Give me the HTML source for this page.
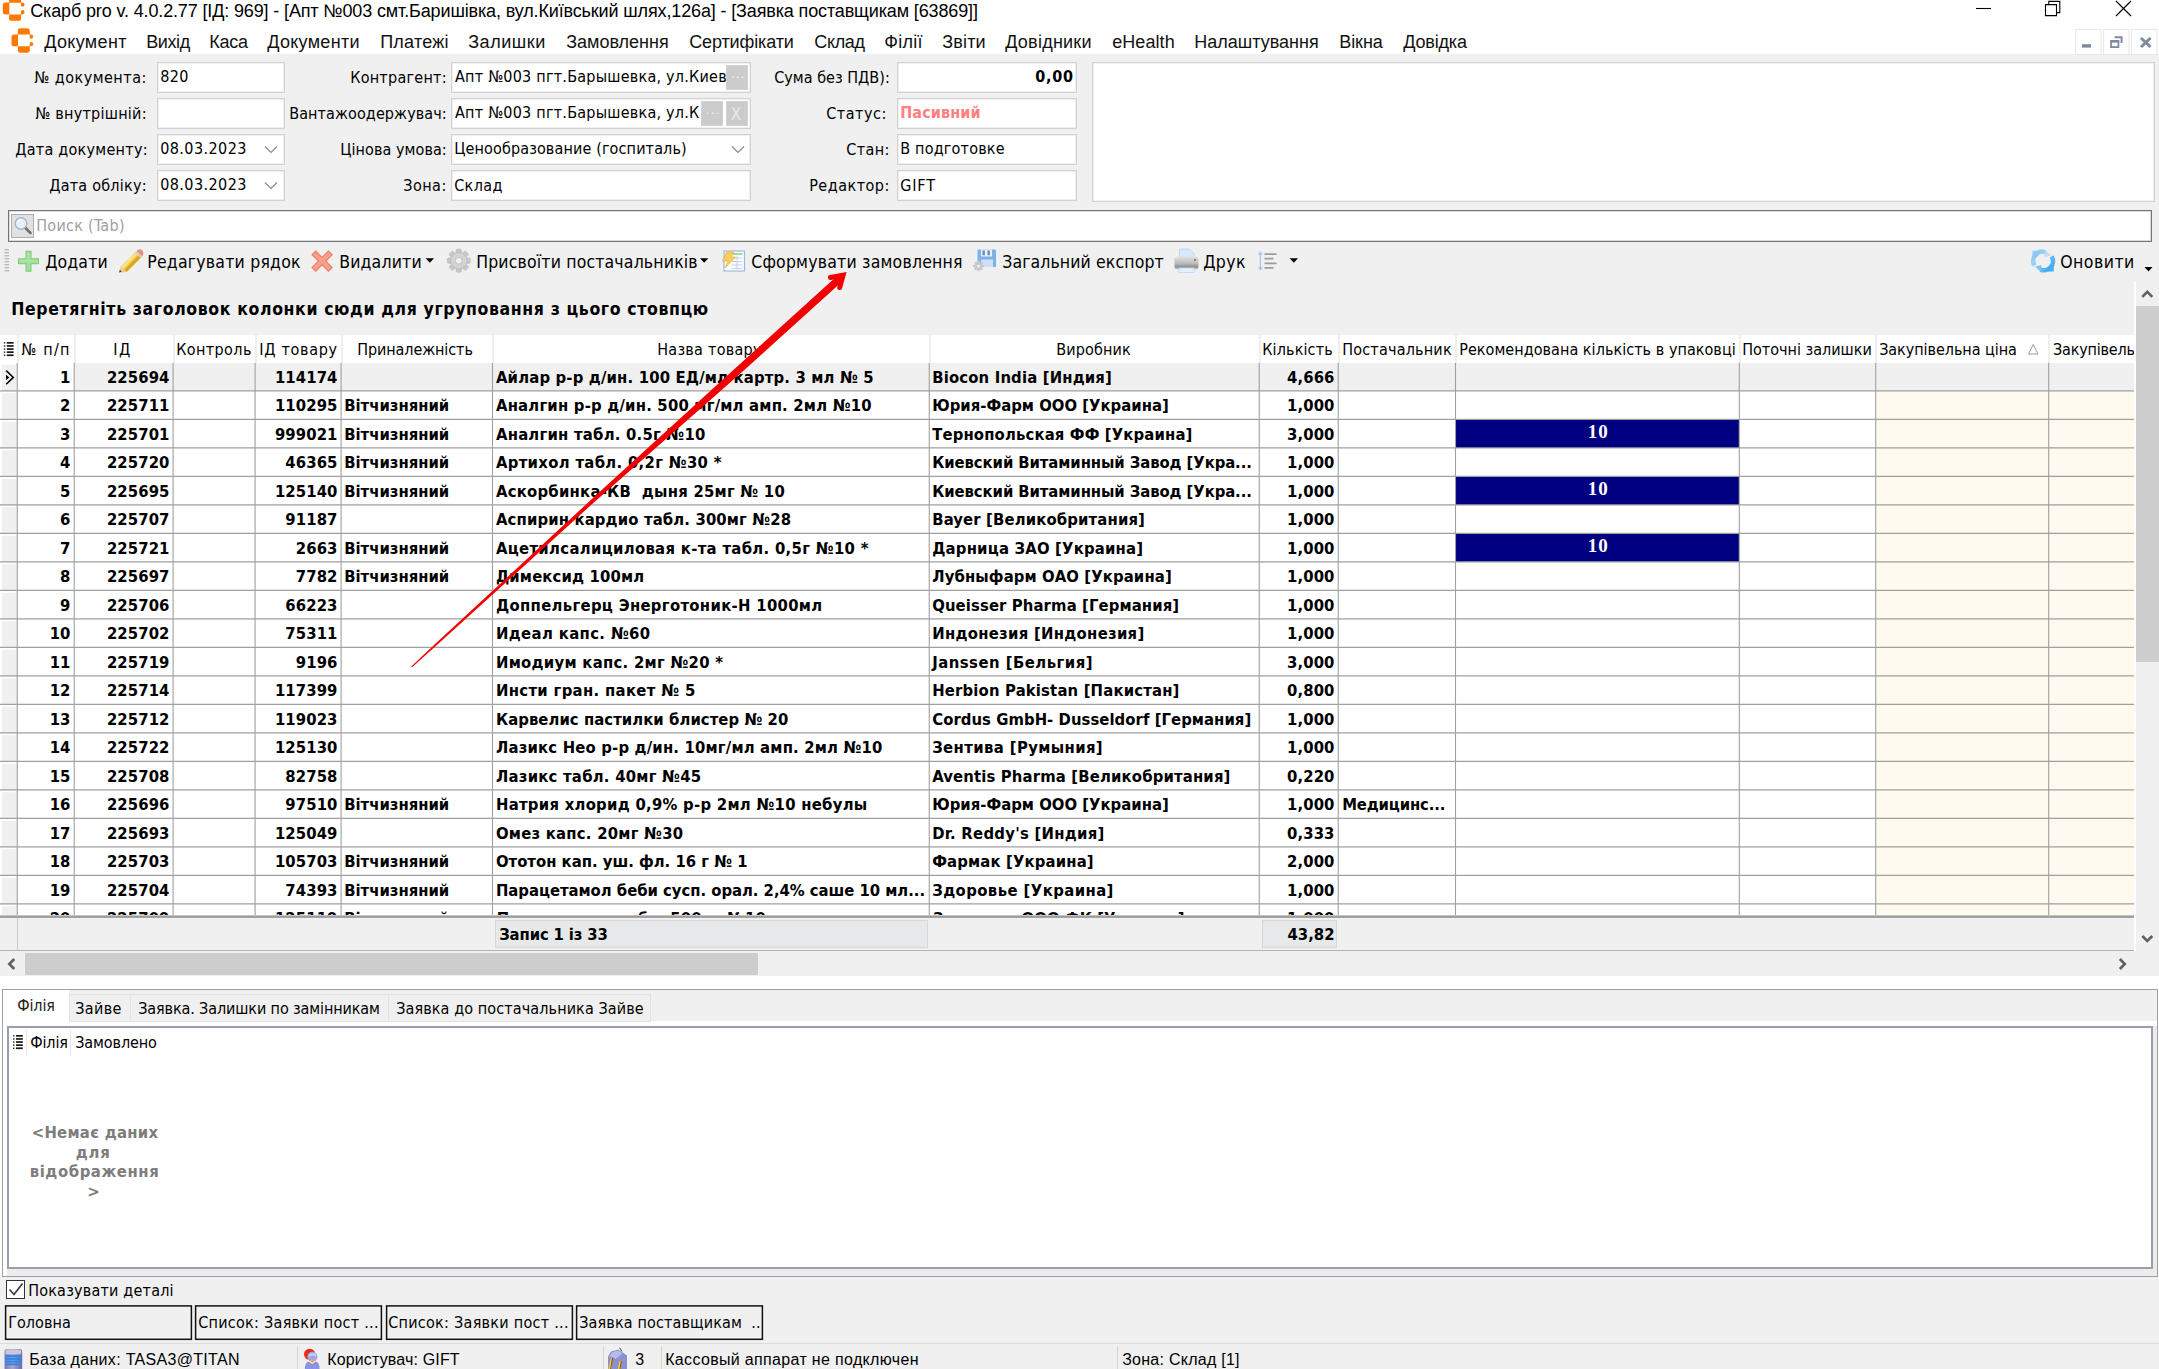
<!DOCTYPE html>
<html lang="uk"><head><meta charset="utf-8"><title>Скарб pro</title><style>
html,body{margin:0;padding:0;}
body{width:2159px;height:1369px;overflow:hidden;background:#f0f0f0;position:relative;font-family:"DejaVu Sans Condensed","Liberation Sans",sans-serif;font-size:16px;color:#000;}
.a{position:absolute;box-sizing:border-box;}
.t{white-space:pre;font-family:"DejaVu Sans Condensed","Liberation Sans",sans-serif;font-stretch:condensed;}
.s{font-family:"Liberation Sans",sans-serif;font-stretch:normal;}
.r{font-family:"Liberation Serif","DejaVu Serif",serif;font-stretch:normal;}
svg{position:absolute;overflow:visible;}
</style></head><body>
<div class="a" style="left:0px;top:0px;width:2159px;height:54px;background:#fff;"></div>
<div class="a t s" style="top:-1.5px;font-size:18px;line-height:24px;left:30.2px;letter-spacing:-0.139px;">Скарб pro v. 4.0.2.77 [ІД: 969] - [Апт №003 смт.Баришівка, вул.Київський шлях,126а] - [Заявка поставщикам [63869]]</div>
<div class="a t s" style="top:30px;font-size:18px;line-height:24px;color:#111;left:44.2px;letter-spacing:0.343px;">Документ</div>
<div class="a t s" style="top:30px;font-size:18px;line-height:24px;color:#111;left:146.2px;letter-spacing:-0.392px;">Вихід</div>
<div class="a t s" style="top:30px;font-size:18px;line-height:24px;color:#111;left:209.2px;letter-spacing:-0.229px;">Каса</div>
<div class="a t s" style="top:30px;font-size:18px;line-height:24px;color:#111;left:267.2px;letter-spacing:0.299px;">Документи</div>
<div class="a t s" style="top:30px;font-size:18px;line-height:24px;color:#111;left:380.2px;letter-spacing:0.235px;">Платежі</div>
<div class="a t s" style="top:30px;font-size:18px;line-height:24px;color:#111;left:468.2px;letter-spacing:0.541px;">Залишки</div>
<div class="a t s" style="top:30px;font-size:18px;line-height:24px;color:#111;left:566.2px;">Замовлення</div>
<div class="a t s" style="top:30px;font-size:18px;line-height:24px;color:#111;left:689.2px;letter-spacing:-0.120px;">Сертифікати</div>
<div class="a t s" style="top:30px;font-size:18px;line-height:24px;color:#111;left:814.2px;letter-spacing:-0.299px;">Склад</div>
<div class="a t s" style="top:30px;font-size:18px;line-height:24px;color:#111;left:884.2px;letter-spacing:0.283px;">Філії</div>
<div class="a t s" style="top:30px;font-size:18px;line-height:24px;color:#111;left:942.2px;letter-spacing:0.173px;">Звіти</div>
<div class="a t s" style="top:30px;font-size:18px;line-height:24px;color:#111;left:1005.2px;letter-spacing:0.244px;">Довідники</div>
<div class="a t s" style="top:30px;font-size:18px;line-height:24px;color:#111;left:1112.2px;letter-spacing:0.079px;">eHealth</div>
<div class="a t s" style="top:30px;font-size:18px;line-height:24px;color:#111;left:1194.2px;letter-spacing:0.015px;">Налаштування</div>
<div class="a t s" style="top:30px;font-size:18px;line-height:24px;color:#111;left:1339.2px;letter-spacing:-0.049px;">Вікна</div>
<div class="a t s" style="top:30px;font-size:18px;line-height:24px;color:#111;left:1403.2px;letter-spacing:-0.164px;">Довідка</div>
<div class="a" style="left:157px;top:62px;width:128px;height:31px;background:#fff;border:1px solid #d2d2d2;box-shadow:inset 0 0 0 1px #f0f0f0;"></div>
<div class="a" style="left:451px;top:62px;width:300px;height:31px;background:#fff;border:1px solid #d2d2d2;box-shadow:inset 0 0 0 1px #f0f0f0;"></div>
<div class="a" style="left:897px;top:62px;width:180px;height:31px;background:#fff;border:1px solid #d2d2d2;box-shadow:inset 0 0 0 1px #f0f0f0;"></div>
<div class="a" style="left:157px;top:98px;width:128px;height:31px;background:#fff;border:1px solid #d2d2d2;box-shadow:inset 0 0 0 1px #f0f0f0;"></div>
<div class="a" style="left:451px;top:98px;width:300px;height:31px;background:#fff;border:1px solid #d2d2d2;box-shadow:inset 0 0 0 1px #f0f0f0;"></div>
<div class="a" style="left:897px;top:98px;width:180px;height:31px;background:#fff;border:1px solid #d2d2d2;box-shadow:inset 0 0 0 1px #f0f0f0;"></div>
<div class="a" style="left:157px;top:134px;width:128px;height:31px;background:#fff;border:1px solid #d2d2d2;box-shadow:inset 0 0 0 1px #f0f0f0;"></div>
<div class="a" style="left:451px;top:134px;width:300px;height:31px;background:#fff;border:1px solid #d2d2d2;box-shadow:inset 0 0 0 1px #f0f0f0;"></div>
<div class="a" style="left:897px;top:134px;width:180px;height:31px;background:#fff;border:1px solid #d2d2d2;box-shadow:inset 0 0 0 1px #f0f0f0;"></div>
<div class="a" style="left:157px;top:170px;width:128px;height:31px;background:#fff;border:1px solid #d2d2d2;box-shadow:inset 0 0 0 1px #f0f0f0;"></div>
<div class="a" style="left:451px;top:170px;width:300px;height:31px;background:#fff;border:1px solid #d2d2d2;box-shadow:inset 0 0 0 1px #f0f0f0;"></div>
<div class="a" style="left:897px;top:170px;width:180px;height:31px;background:#fff;border:1px solid #d2d2d2;box-shadow:inset 0 0 0 1px #f0f0f0;"></div>
<div class="a" style="left:1092px;top:62px;width:1063px;height:140px;background:#fff;border:1px solid #d2d2d2;box-shadow:inset 0 0 0 1px #f0f0f0;"></div>
<div class="a" style="left:726px;top:65px;width:22px;height:25px;background:#cbcbcb;border:1px solid #d2d2d2;"></div>
<div class="a" style="left:701px;top:101px;width:22px;height:25px;background:#cbcbcb;border:1px solid #d2d2d2;"></div>
<div class="a" style="left:726px;top:101px;width:22px;height:25px;background:#cbcbcb;border:1px solid #d2d2d2;"></div>
<div class="a t" style="top:65.5px;font-size:16px;line-height:24px;left:34.2px;letter-spacing:0.491px;">№ документа:</div>
<div class="a t" style="top:101.5px;font-size:16px;line-height:24px;left:35.2px;letter-spacing:0.255px;">№ внутрішній:</div>
<div class="a t" style="top:137.5px;font-size:16px;line-height:24px;left:15.2px;letter-spacing:0.260px;">Дата документу:</div>
<div class="a t" style="top:173.5px;font-size:16px;line-height:24px;left:49.2px;letter-spacing:0.234px;">Дата обліку:</div>
<div class="a t" style="top:65.5px;font-size:16px;line-height:24px;left:350.2px;letter-spacing:0.249px;">Контрагент:</div>
<div class="a t" style="top:101.5px;font-size:16px;line-height:24px;left:289.2px;letter-spacing:0.094px;">Вантажоодержувач:</div>
<div class="a t" style="top:137.5px;font-size:16px;line-height:24px;left:340.2px;letter-spacing:0.076px;">Цінова умова:</div>
<div class="a t" style="top:173.5px;font-size:16px;line-height:24px;left:403.2px;letter-spacing:0.495px;">Зона:</div>
<div class="a t" style="top:65.5px;font-size:16px;line-height:24px;left:774.2px;letter-spacing:0.028px;">Сума без ПДВ):</div>
<div class="a t" style="top:101.5px;font-size:16px;line-height:24px;left:826.2px;letter-spacing:0.525px;">Статус:</div>
<div class="a t" style="top:137.5px;font-size:16px;line-height:24px;left:846.2px;letter-spacing:0.414px;">Стан:</div>
<div class="a t" style="top:173.5px;font-size:16px;line-height:24px;left:809.2px;letter-spacing:0.490px;">Редактор:</div>
<div class="a t" style="top:65px;font-size:16px;line-height:24px;left:160.2px;letter-spacing:0.377px;">820</div>
<div class="a t" style="top:137px;font-size:16px;line-height:24px;left:160.2px;letter-spacing:0.421px;">08.03.2023</div>
<div class="a t" style="top:173px;font-size:16px;line-height:24px;left:160.2px;letter-spacing:0.421px;">08.03.2023</div>
<div class="a" style="left:453px;top:64px;width:272.5px;height:27px;overflow:hidden"><div class="a t" style="left:2px;top:1px;line-height:24px;letter-spacing:.23px">Апт №003 пгт.Барышевка, ул.Киевс</div></div>
<div class="a" style="left:453px;top:100px;width:247px;height:27px;overflow:hidden"><div class="a t" style="left:2px;top:1px;line-height:24px;letter-spacing:.23px">Апт №003 пгт.Барышевка, ул.Ки</div></div>
<div class="a t" style="top:61.5px;font-size:13px;line-height:24px;color:#f2f2f2;left:730.7px;letter-spacing:1.320px;">...</div>
<div class="a t" style="top:97.5px;font-size:13px;line-height:24px;color:#f2f2f2;left:705.7px;letter-spacing:1.320px;">...</div>
<div class="a t" style="top:102px;font-size:17px;line-height:24px;color:#e9e9ee;left:730.7px;letter-spacing:2.116px;">X</div>
<div class="a t" style="top:137px;font-size:16px;line-height:24px;left:454.2px;letter-spacing:0.132px;">Ценообразование (госпиталь)</div>
<div class="a t" style="top:174px;font-size:16px;line-height:24px;left:454.2px;letter-spacing:0.373px;">Склад</div>
<div class="a t" style="top:65px;font-size:16px;line-height:24px;font-weight:bold;left:1035.2px;letter-spacing:0.771px;">0,00</div>
<div class="a t" style="top:101px;font-size:16px;line-height:24px;font-weight:bold;color:#ff8080;left:900.2px;letter-spacing:0.124px;">Пасивний</div>
<div class="a t" style="top:137px;font-size:16px;line-height:24px;left:900.2px;letter-spacing:0.198px;">В подготовке</div>
<div class="a t" style="top:174px;font-size:16px;line-height:24px;left:900.2px;letter-spacing:0.853px;">GIFT</div>
<div class="a" style="left:8px;top:210px;width:2144px;height:32px;background:#fff;border:1px solid #747474;box-shadow:inset 0 0 0 1px #dcdcdc;"></div>
<div class="a" style="left:11px;top:214px;width:23px;height:24px;background:#e1e1e1;border:1px solid #adadad;"></div>
<div class="a t" style="top:213.5px;font-size:16px;line-height:24px;color:#a0a0a0;left:36.2px;letter-spacing:0.282px;">Поиск (Tab)</div>
<div class="a t" style="top:250px;font-size:17.5px;line-height:24px;left:45.2px;letter-spacing:0.121px;">Додати</div>
<div class="a t" style="top:250px;font-size:17.5px;line-height:24px;left:147.2px;letter-spacing:0.217px;">Редагувати рядок</div>
<div class="a t" style="top:250px;font-size:17.5px;line-height:24px;left:339.2px;letter-spacing:0.167px;">Видалити</div>
<div class="a t" style="top:250px;font-size:17.5px;line-height:24px;left:476.2px;letter-spacing:0.158px;">Присвоїти постачальників</div>
<div class="a t" style="top:250px;font-size:17.5px;line-height:24px;left:751.2px;letter-spacing:0.208px;">Сформувати замовлення</div>
<div class="a t" style="top:250px;font-size:17.5px;line-height:24px;left:1002.2px;letter-spacing:0.111px;">Загальний експорт</div>
<div class="a t" style="top:250px;font-size:17.5px;line-height:24px;left:1203.2px;letter-spacing:0.365px;">Друк</div>
<div class="a t" style="top:250px;font-size:17.5px;line-height:24px;left:2060.2px;letter-spacing:0.481px;">Оновити</div>
<div class="a t" style="top:296.5px;font-size:17.5px;line-height:24px;font-weight:bold;left:11.2px;letter-spacing:0.627px;">Перетягніть заголовок колонки сюди для угруповання з цього стовпцю</div>
<div class="a" style="left:0px;top:335px;width:2134px;height:28px;background:#fff;"></div>
<div class="a t" style="top:337.5px;font-size:16px;line-height:24px;left:21.2px;letter-spacing:1.273px;">№ п/п</div>
<div class="a t" style="top:337.5px;font-size:16px;line-height:24px;left:113.2px;letter-spacing:1.550px;">ІД</div>
<div class="a t" style="top:337.5px;font-size:16px;line-height:24px;left:176.2px;letter-spacing:0.393px;">Контроль</div>
<div class="a t" style="top:337.5px;font-size:16px;line-height:24px;left:259.2px;letter-spacing:0.709px;">ІД товару</div>
<div class="a t" style="top:337.5px;font-size:16px;line-height:24px;left:357.2px;letter-spacing:-0.091px;">Приналежність</div>
<div class="a t" style="top:337.5px;font-size:16px;line-height:24px;left:657.2px;letter-spacing:0.273px;">Назва товару</div>
<div class="a t" style="top:337.5px;font-size:16px;line-height:24px;left:1056.2px;letter-spacing:0.136px;">Виробник</div>
<div class="a t" style="top:337.5px;font-size:16px;line-height:24px;left:1262.2px;letter-spacing:0.134px;">Кількість</div>
<div class="a t" style="top:337.5px;font-size:16px;line-height:24px;left:1342.2px;letter-spacing:0.197px;">Постачальник</div>
<div class="a t" style="top:337.5px;font-size:16px;line-height:24px;left:1459.2px;letter-spacing:0.045px;">Рекомендована кількість в упаковці</div>
<div class="a t" style="top:337.5px;font-size:16px;line-height:24px;left:1742.2px;">Поточні залишки</div>
<div class="a t" style="top:337.5px;font-size:16px;line-height:24px;left:1879.2px;letter-spacing:-0.056px;">Закупівельна ціна</div>
<div class="a" style="left:2049px;top:335px;width:85px;height:28px;overflow:hidden"><div class="a t" style="left:4px;top:2.5px;line-height:24px;font-size:16px;letter-spacing:-0.2px">Закупівельна</div></div>
<div class="a" style="left:17px;top:335px;width:2px;height:28px;background:#efefef;"></div>
<div class="a" style="left:74px;top:335px;width:2px;height:28px;background:#efefef;"></div>
<div class="a" style="left:173px;top:335px;width:2px;height:28px;background:#efefef;"></div>
<div class="a" style="left:255px;top:335px;width:2px;height:28px;background:#efefef;"></div>
<div class="a" style="left:341px;top:335px;width:2px;height:28px;background:#efefef;"></div>
<div class="a" style="left:492px;top:335px;width:2px;height:28px;background:#efefef;"></div>
<div class="a" style="left:929px;top:335px;width:2px;height:28px;background:#efefef;"></div>
<div class="a" style="left:1259px;top:335px;width:2px;height:28px;background:#efefef;"></div>
<div class="a" style="left:1338px;top:335px;width:2px;height:28px;background:#efefef;"></div>
<div class="a" style="left:1455px;top:335px;width:2px;height:28px;background:#efefef;"></div>
<div class="a" style="left:1739px;top:335px;width:2px;height:28px;background:#efefef;"></div>
<div class="a" style="left:1875px;top:335px;width:2px;height:28px;background:#efefef;"></div>
<div class="a" style="left:2048px;top:335px;width:2px;height:28px;background:#efefef;"></div>
<div class="a" style="left:0;top:363px;width:2134px;height:552px;overflow:hidden;background:#fff">
<div class="a" style="left:2px;top:0;width:15px;height:600px;background:#f0f0f0"></div>
<div class="a" style="left:1876px;top:27.5px;width:258px;height:600px;background:#fffaf0"></div>
<div class="a" style="left:75px;top:0;width:2059px;height:27.5px;background:#f0f0f0"></div>
<div class="a" style="left:1456px;top:57px;width:283px;height:27.5px;background:#000080"></div>
<div class="a" style="left:1456px;top:114px;width:283px;height:27.5px;background:#000080"></div>
<div class="a" style="left:1456px;top:171px;width:283px;height:27.5px;background:#000080"></div>
<svg width="2134" height="552" viewBox="0 0 2134 552" style="left:0;top:0"><path d="M0 0.9H16.5" stroke="#fff" stroke-width="1.6"/><path d="M0 29.4H16.5" stroke="#fff" stroke-width="1.6"/><path d="M0 57.9H16.5" stroke="#fff" stroke-width="1.6"/><path d="M0 86.4H16.5" stroke="#fff" stroke-width="1.6"/><path d="M0 114.9H16.5" stroke="#fff" stroke-width="1.6"/><path d="M0 143.4H16.5" stroke="#fff" stroke-width="1.6"/><path d="M0 171.9H16.5" stroke="#fff" stroke-width="1.6"/><path d="M0 200.4H16.5" stroke="#fff" stroke-width="1.6"/><path d="M0 228.9H16.5" stroke="#fff" stroke-width="1.6"/><path d="M0 257.4H16.5" stroke="#fff" stroke-width="1.6"/><path d="M0 285.9H16.5" stroke="#fff" stroke-width="1.6"/><path d="M0 314.4H16.5" stroke="#fff" stroke-width="1.6"/><path d="M0 342.9H16.5" stroke="#fff" stroke-width="1.6"/><path d="M0 371.4H16.5" stroke="#fff" stroke-width="1.6"/><path d="M0 399.9H16.5" stroke="#fff" stroke-width="1.6"/><path d="M0 428.4H16.5" stroke="#fff" stroke-width="1.6"/><path d="M0 456.9H16.5" stroke="#fff" stroke-width="1.6"/><path d="M0 485.4H16.5" stroke="#fff" stroke-width="1.6"/><path d="M0 513.9H16.5" stroke="#fff" stroke-width="1.6"/><path d="M0 542.4H16.5" stroke="#fff" stroke-width="1.6"/><path d="M0 570.9H16.5" stroke="#fff" stroke-width="1.6"/><path d="M0 27.85H2134M0 56.35H2134M0 84.85H2134M0 113.35H2134M0 141.85H2134M0 170.35H2134M0 198.85H2134M0 227.35H2134M0 255.85H2134M0 284.35H2134M0 312.85H2134M0 341.35H2134M0 369.85H2134M0 398.35H2134M0 426.85H2134M0 455.35H2134M0 483.85H2134M0 512.35H2134M0 540.85H2134M0 569.35H2134M17.27 0V552M74.25 0V552M173.1 0V552M255.1 0V552M341.1 0V552M492.5 0V552M929.25 0V552M1259.25 0V552M1338.25 0V552M1455.5 0V552M1739.3 0V552M1875.7 0V552M2048.7 0V552" stroke="#a0a0a0" stroke-width="1.1" fill="none"/><path d="M6.2 7.6L13.3 14.4L6.2 21.2" stroke="#000" stroke-width="1.5" fill="none"/><path d="M6 11.8L9.4 14.4L6 17z" fill="#000"/></svg>
</div>
<div class="a t" style="top:366px;font-size:16.5px;line-height:24px;font-weight:bold;right:2088.5px;letter-spacing:.1px;">1</div>
<div class="a t" style="top:366px;font-size:16.5px;line-height:24px;font-weight:bold;right:1989.5px;letter-spacing:.1px;">225694</div>
<div class="a t" style="top:366px;font-size:16.5px;line-height:24px;font-weight:bold;right:1821.5px;letter-spacing:.1px;">114174</div>
<div class="a t" style="top:366px;font-size:16.5px;line-height:24px;font-weight:bold;left:495.95px;letter-spacing:0.169px;">Айлар р-р д/ин. 100 ЕД/мл картр. 3 мл № 5</div>
<div class="a t" style="top:366px;font-size:16.5px;line-height:24px;font-weight:bold;left:932.2px;letter-spacing:0.168px;">Biocon India [Индия]</div>
<div class="a t" style="top:366px;font-size:16.5px;line-height:24px;font-weight:bold;right:824.5px;letter-spacing:.1px;">4,666</div>
<div class="a t" style="top:394px;font-size:16.5px;line-height:24px;font-weight:bold;right:2088.5px;letter-spacing:.1px;">2</div>
<div class="a t" style="top:394px;font-size:16.5px;line-height:24px;font-weight:bold;right:1989.5px;letter-spacing:.1px;">225711</div>
<div class="a t" style="top:394px;font-size:16.5px;line-height:24px;font-weight:bold;right:1821.5px;letter-spacing:.1px;">110295</div>
<div class="a t" style="top:394px;font-size:16.5px;line-height:24px;font-weight:bold;left:344.2px;">Вітчизняний</div>
<div class="a t" style="top:394px;font-size:16.5px;line-height:24px;font-weight:bold;left:495.95px;letter-spacing:0.208px;">Аналгин р-р д/ин. 500 мг/мл амп. 2мл №10</div>
<div class="a t" style="top:394px;font-size:16.5px;line-height:24px;font-weight:bold;left:932.2px;letter-spacing:0.016px;">Юрия-Фарм ООО [Украина]</div>
<div class="a t" style="top:394px;font-size:16.5px;line-height:24px;font-weight:bold;right:824.5px;letter-spacing:.1px;">1,000</div>
<div class="a t" style="top:423px;font-size:16.5px;line-height:24px;font-weight:bold;right:2088.5px;letter-spacing:.1px;">3</div>
<div class="a t" style="top:423px;font-size:16.5px;line-height:24px;font-weight:bold;right:1989.5px;letter-spacing:.1px;">225701</div>
<div class="a t" style="top:423px;font-size:16.5px;line-height:24px;font-weight:bold;right:1821.5px;letter-spacing:.1px;">999021</div>
<div class="a t" style="top:423px;font-size:16.5px;line-height:24px;font-weight:bold;left:344.2px;">Вітчизняний</div>
<div class="a t" style="top:423px;font-size:16.5px;line-height:24px;font-weight:bold;left:495.95px;letter-spacing:0.226px;">Аналгин табл. 0.5г №10</div>
<div class="a t" style="top:423px;font-size:16.5px;line-height:24px;font-weight:bold;left:932.2px;letter-spacing:0.144px;">Тернопольская ФФ [Украина]</div>
<div class="a t" style="top:423px;font-size:16.5px;line-height:24px;font-weight:bold;right:824.5px;letter-spacing:.1px;">3,000</div>
<div class="a t r" style="top:420px;font-size:19px;line-height:24px;font-weight:bold;color:#fff;left:1587.7px;letter-spacing:1.050px;">10</div>
<div class="a t" style="top:451px;font-size:16.5px;line-height:24px;font-weight:bold;right:2088.5px;letter-spacing:.1px;">4</div>
<div class="a t" style="top:451px;font-size:16.5px;line-height:24px;font-weight:bold;right:1989.5px;letter-spacing:.1px;">225720</div>
<div class="a t" style="top:451px;font-size:16.5px;line-height:24px;font-weight:bold;right:1821.5px;letter-spacing:.1px;">46365</div>
<div class="a t" style="top:451px;font-size:16.5px;line-height:24px;font-weight:bold;left:344.2px;">Вітчизняний</div>
<div class="a t" style="top:451px;font-size:16.5px;line-height:24px;font-weight:bold;left:495.95px;letter-spacing:0.316px;">Артихол табл. 0,2г №30 *</div>
<div class="a t" style="top:451px;font-size:16.5px;line-height:24px;font-weight:bold;left:932.2px;letter-spacing:-0.082px;">Киевский Витаминный Завод [Укра...</div>
<div class="a t" style="top:451px;font-size:16.5px;line-height:24px;font-weight:bold;right:824.5px;letter-spacing:.1px;">1,000</div>
<div class="a t" style="top:480px;font-size:16.5px;line-height:24px;font-weight:bold;right:2088.5px;letter-spacing:.1px;">5</div>
<div class="a t" style="top:480px;font-size:16.5px;line-height:24px;font-weight:bold;right:1989.5px;letter-spacing:.1px;">225695</div>
<div class="a t" style="top:480px;font-size:16.5px;line-height:24px;font-weight:bold;right:1821.5px;letter-spacing:.1px;">125140</div>
<div class="a t" style="top:480px;font-size:16.5px;line-height:24px;font-weight:bold;left:344.2px;">Вітчизняний</div>
<div class="a t" style="top:480px;font-size:16.5px;line-height:24px;font-weight:bold;left:495.95px;letter-spacing:0.244px;">Аскорбинка-КВ  дыня 25мг № 10</div>
<div class="a t" style="top:480px;font-size:16.5px;line-height:24px;font-weight:bold;left:932.2px;letter-spacing:-0.082px;">Киевский Витаминный Завод [Укра...</div>
<div class="a t" style="top:480px;font-size:16.5px;line-height:24px;font-weight:bold;right:824.5px;letter-spacing:.1px;">1,000</div>
<div class="a t r" style="top:477px;font-size:19px;line-height:24px;font-weight:bold;color:#fff;left:1587.7px;letter-spacing:1.050px;">10</div>
<div class="a t" style="top:508px;font-size:16.5px;line-height:24px;font-weight:bold;right:2088.5px;letter-spacing:.1px;">6</div>
<div class="a t" style="top:508px;font-size:16.5px;line-height:24px;font-weight:bold;right:1989.5px;letter-spacing:.1px;">225707</div>
<div class="a t" style="top:508px;font-size:16.5px;line-height:24px;font-weight:bold;right:1821.5px;letter-spacing:.1px;">91187</div>
<div class="a t" style="top:508px;font-size:16.5px;line-height:24px;font-weight:bold;left:495.95px;letter-spacing:0.141px;">Аспирин кардио табл. 300мг №28</div>
<div class="a t" style="top:508px;font-size:16.5px;line-height:24px;font-weight:bold;left:932.2px;letter-spacing:0.140px;">Bayer [Великобритания]</div>
<div class="a t" style="top:508px;font-size:16.5px;line-height:24px;font-weight:bold;right:824.5px;letter-spacing:.1px;">1,000</div>
<div class="a t" style="top:537px;font-size:16.5px;line-height:24px;font-weight:bold;right:2088.5px;letter-spacing:.1px;">7</div>
<div class="a t" style="top:537px;font-size:16.5px;line-height:24px;font-weight:bold;right:1989.5px;letter-spacing:.1px;">225721</div>
<div class="a t" style="top:537px;font-size:16.5px;line-height:24px;font-weight:bold;right:1821.5px;letter-spacing:.1px;">2663</div>
<div class="a t" style="top:537px;font-size:16.5px;line-height:24px;font-weight:bold;left:344.2px;">Вітчизняний</div>
<div class="a t" style="top:537px;font-size:16.5px;line-height:24px;font-weight:bold;left:495.95px;letter-spacing:0.317px;">Ацетилсалициловая к-та табл. 0,5г №10 *</div>
<div class="a t" style="top:537px;font-size:16.5px;line-height:24px;font-weight:bold;left:932.2px;letter-spacing:0.198px;">Дарница ЗАО [Украина]</div>
<div class="a t" style="top:537px;font-size:16.5px;line-height:24px;font-weight:bold;right:824.5px;letter-spacing:.1px;">1,000</div>
<div class="a t r" style="top:534px;font-size:19px;line-height:24px;font-weight:bold;color:#fff;left:1587.7px;letter-spacing:1.050px;">10</div>
<div class="a t" style="top:565px;font-size:16.5px;line-height:24px;font-weight:bold;right:2088.5px;letter-spacing:.1px;">8</div>
<div class="a t" style="top:565px;font-size:16.5px;line-height:24px;font-weight:bold;right:1989.5px;letter-spacing:.1px;">225697</div>
<div class="a t" style="top:565px;font-size:16.5px;line-height:24px;font-weight:bold;right:1821.5px;letter-spacing:.1px;">7782</div>
<div class="a t" style="top:565px;font-size:16.5px;line-height:24px;font-weight:bold;left:344.2px;">Вітчизняний</div>
<div class="a t" style="top:565px;font-size:16.5px;line-height:24px;font-weight:bold;left:495.95px;letter-spacing:0.149px;">Димексид 100мл</div>
<div class="a t" style="top:565px;font-size:16.5px;line-height:24px;font-weight:bold;left:932.2px;letter-spacing:0.112px;">Лубныфарм ОАО [Украина]</div>
<div class="a t" style="top:565px;font-size:16.5px;line-height:24px;font-weight:bold;right:824.5px;letter-spacing:.1px;">1,000</div>
<div class="a t" style="top:594px;font-size:16.5px;line-height:24px;font-weight:bold;right:2088.5px;letter-spacing:.1px;">9</div>
<div class="a t" style="top:594px;font-size:16.5px;line-height:24px;font-weight:bold;right:1989.5px;letter-spacing:.1px;">225706</div>
<div class="a t" style="top:594px;font-size:16.5px;line-height:24px;font-weight:bold;right:1821.5px;letter-spacing:.1px;">66223</div>
<div class="a t" style="top:594px;font-size:16.5px;line-height:24px;font-weight:bold;left:495.95px;letter-spacing:0.321px;">Доппельгерц Энерготоник-Н 1000мл</div>
<div class="a t" style="top:594px;font-size:16.5px;line-height:24px;font-weight:bold;left:932.2px;letter-spacing:0.116px;">Queisser Pharma [Германия]</div>
<div class="a t" style="top:594px;font-size:16.5px;line-height:24px;font-weight:bold;right:824.5px;letter-spacing:.1px;">1,000</div>
<div class="a t" style="top:622px;font-size:16.5px;line-height:24px;font-weight:bold;right:2088.5px;letter-spacing:.1px;">10</div>
<div class="a t" style="top:622px;font-size:16.5px;line-height:24px;font-weight:bold;right:1989.5px;letter-spacing:.1px;">225702</div>
<div class="a t" style="top:622px;font-size:16.5px;line-height:24px;font-weight:bold;right:1821.5px;letter-spacing:.1px;">75311</div>
<div class="a t" style="top:622px;font-size:16.5px;line-height:24px;font-weight:bold;left:495.95px;letter-spacing:0.372px;">Идеал капс. №60</div>
<div class="a t" style="top:622px;font-size:16.5px;line-height:24px;font-weight:bold;left:932.2px;letter-spacing:0.290px;">Индонезия [Индонезия]</div>
<div class="a t" style="top:622px;font-size:16.5px;line-height:24px;font-weight:bold;right:824.5px;letter-spacing:.1px;">1,000</div>
<div class="a t" style="top:651px;font-size:16.5px;line-height:24px;font-weight:bold;right:2088.5px;letter-spacing:.1px;">11</div>
<div class="a t" style="top:651px;font-size:16.5px;line-height:24px;font-weight:bold;right:1989.5px;letter-spacing:.1px;">225719</div>
<div class="a t" style="top:651px;font-size:16.5px;line-height:24px;font-weight:bold;right:1821.5px;letter-spacing:.1px;">9196</div>
<div class="a t" style="top:651px;font-size:16.5px;line-height:24px;font-weight:bold;left:495.95px;letter-spacing:0.280px;">Имодиум капс. 2мг №20 *</div>
<div class="a t" style="top:651px;font-size:16.5px;line-height:24px;font-weight:bold;left:932.2px;letter-spacing:0.491px;">Janssen [Бельгия]</div>
<div class="a t" style="top:651px;font-size:16.5px;line-height:24px;font-weight:bold;right:824.5px;letter-spacing:.1px;">3,000</div>
<div class="a t" style="top:679px;font-size:16.5px;line-height:24px;font-weight:bold;right:2088.5px;letter-spacing:.1px;">12</div>
<div class="a t" style="top:679px;font-size:16.5px;line-height:24px;font-weight:bold;right:1989.5px;letter-spacing:.1px;">225714</div>
<div class="a t" style="top:679px;font-size:16.5px;line-height:24px;font-weight:bold;right:1821.5px;letter-spacing:.1px;">117399</div>
<div class="a t" style="top:679px;font-size:16.5px;line-height:24px;font-weight:bold;left:495.95px;letter-spacing:0.331px;">Инсти гран. пакет № 5</div>
<div class="a t" style="top:679px;font-size:16.5px;line-height:24px;font-weight:bold;left:932.2px;letter-spacing:0.172px;">Herbion Pakistan [Пакистан]</div>
<div class="a t" style="top:679px;font-size:16.5px;line-height:24px;font-weight:bold;right:824.5px;letter-spacing:.1px;">0,800</div>
<div class="a t" style="top:708px;font-size:16.5px;line-height:24px;font-weight:bold;right:2088.5px;letter-spacing:.1px;">13</div>
<div class="a t" style="top:708px;font-size:16.5px;line-height:24px;font-weight:bold;right:1989.5px;letter-spacing:.1px;">225712</div>
<div class="a t" style="top:708px;font-size:16.5px;line-height:24px;font-weight:bold;right:1821.5px;letter-spacing:.1px;">119023</div>
<div class="a t" style="top:708px;font-size:16.5px;line-height:24px;font-weight:bold;left:495.95px;letter-spacing:0.056px;">Карвелис пастилки блистер № 20</div>
<div class="a t" style="top:708px;font-size:16.5px;line-height:24px;font-weight:bold;left:932.2px;letter-spacing:0.056px;">Cordus GmbH- Dusseldorf [Германия]</div>
<div class="a t" style="top:708px;font-size:16.5px;line-height:24px;font-weight:bold;right:824.5px;letter-spacing:.1px;">1,000</div>
<div class="a t" style="top:736px;font-size:16.5px;line-height:24px;font-weight:bold;right:2088.5px;letter-spacing:.1px;">14</div>
<div class="a t" style="top:736px;font-size:16.5px;line-height:24px;font-weight:bold;right:1989.5px;letter-spacing:.1px;">225722</div>
<div class="a t" style="top:736px;font-size:16.5px;line-height:24px;font-weight:bold;right:1821.5px;letter-spacing:.1px;">125130</div>
<div class="a t" style="top:736px;font-size:16.5px;line-height:24px;font-weight:bold;left:495.95px;letter-spacing:0.183px;">Лазикс Нео р-р д/ин. 10мг/мл амп. 2мл №10</div>
<div class="a t" style="top:736px;font-size:16.5px;line-height:24px;font-weight:bold;left:932.2px;letter-spacing:0.384px;">Зентива [Румыния]</div>
<div class="a t" style="top:736px;font-size:16.5px;line-height:24px;font-weight:bold;right:824.5px;letter-spacing:.1px;">1,000</div>
<div class="a t" style="top:765px;font-size:16.5px;line-height:24px;font-weight:bold;right:2088.5px;letter-spacing:.1px;">15</div>
<div class="a t" style="top:765px;font-size:16.5px;line-height:24px;font-weight:bold;right:1989.5px;letter-spacing:.1px;">225708</div>
<div class="a t" style="top:765px;font-size:16.5px;line-height:24px;font-weight:bold;right:1821.5px;letter-spacing:.1px;">82758</div>
<div class="a t" style="top:765px;font-size:16.5px;line-height:24px;font-weight:bold;left:495.95px;letter-spacing:0.240px;">Лазикс табл. 40мг №45</div>
<div class="a t" style="top:765px;font-size:16.5px;line-height:24px;font-weight:bold;left:932.2px;letter-spacing:0.155px;">Aventis Pharma [Великобритания]</div>
<div class="a t" style="top:765px;font-size:16.5px;line-height:24px;font-weight:bold;right:824.5px;letter-spacing:.1px;">0,220</div>
<div class="a t" style="top:793px;font-size:16.5px;line-height:24px;font-weight:bold;right:2088.5px;letter-spacing:.1px;">16</div>
<div class="a t" style="top:793px;font-size:16.5px;line-height:24px;font-weight:bold;right:1989.5px;letter-spacing:.1px;">225696</div>
<div class="a t" style="top:793px;font-size:16.5px;line-height:24px;font-weight:bold;right:1821.5px;letter-spacing:.1px;">97510</div>
<div class="a t" style="top:793px;font-size:16.5px;line-height:24px;font-weight:bold;left:344.2px;">Вітчизняний</div>
<div class="a t" style="top:793px;font-size:16.5px;line-height:24px;font-weight:bold;left:495.95px;letter-spacing:0.276px;">Натрия хлорид 0,9% р-р 2мл №10 небулы</div>
<div class="a t" style="top:793px;font-size:16.5px;line-height:24px;font-weight:bold;left:932.2px;letter-spacing:0.016px;">Юрия-Фарм ООО [Украина]</div>
<div class="a t" style="top:793px;font-size:16.5px;line-height:24px;font-weight:bold;right:824.5px;letter-spacing:.1px;">1,000</div>
<div class="a t" style="top:793px;font-size:16.5px;line-height:24px;font-weight:bold;left:1342.2px;letter-spacing:-0.139px;">Медицинс...</div>
<div class="a t" style="top:822px;font-size:16.5px;line-height:24px;font-weight:bold;right:2088.5px;letter-spacing:.1px;">17</div>
<div class="a t" style="top:822px;font-size:16.5px;line-height:24px;font-weight:bold;right:1989.5px;letter-spacing:.1px;">225693</div>
<div class="a t" style="top:822px;font-size:16.5px;line-height:24px;font-weight:bold;right:1821.5px;letter-spacing:.1px;">125049</div>
<div class="a t" style="top:822px;font-size:16.5px;line-height:24px;font-weight:bold;left:495.95px;letter-spacing:0.239px;">Омез капс. 20мг №30</div>
<div class="a t" style="top:822px;font-size:16.5px;line-height:24px;font-weight:bold;left:932.2px;letter-spacing:0.268px;">Dr. Reddy's [Индия]</div>
<div class="a t" style="top:822px;font-size:16.5px;line-height:24px;font-weight:bold;right:824.5px;letter-spacing:.1px;">0,333</div>
<div class="a t" style="top:850px;font-size:16.5px;line-height:24px;font-weight:bold;right:2088.5px;letter-spacing:.1px;">18</div>
<div class="a t" style="top:850px;font-size:16.5px;line-height:24px;font-weight:bold;right:1989.5px;letter-spacing:.1px;">225703</div>
<div class="a t" style="top:850px;font-size:16.5px;line-height:24px;font-weight:bold;right:1821.5px;letter-spacing:.1px;">105703</div>
<div class="a t" style="top:850px;font-size:16.5px;line-height:24px;font-weight:bold;left:344.2px;">Вітчизняний</div>
<div class="a t" style="top:850px;font-size:16.5px;line-height:24px;font-weight:bold;left:495.95px;">Ототон кап. уш. фл. 16 г № 1</div>
<div class="a t" style="top:850px;font-size:16.5px;line-height:24px;font-weight:bold;left:932.2px;letter-spacing:0.152px;">Фармак [Украина]</div>
<div class="a t" style="top:850px;font-size:16.5px;line-height:24px;font-weight:bold;right:824.5px;letter-spacing:.1px;">2,000</div>
<div class="a t" style="top:879px;font-size:16.5px;line-height:24px;font-weight:bold;right:2088.5px;letter-spacing:.1px;">19</div>
<div class="a t" style="top:879px;font-size:16.5px;line-height:24px;font-weight:bold;right:1989.5px;letter-spacing:.1px;">225704</div>
<div class="a t" style="top:879px;font-size:16.5px;line-height:24px;font-weight:bold;right:1821.5px;letter-spacing:.1px;">74393</div>
<div class="a t" style="top:879px;font-size:16.5px;line-height:24px;font-weight:bold;left:344.2px;">Вітчизняний</div>
<div class="a t" style="top:879px;font-size:16.5px;line-height:24px;font-weight:bold;left:495.95px;letter-spacing:-0.025px;">Парацетамол беби сусп. орал. 2,4% саше 10 мл...</div>
<div class="a t" style="top:879px;font-size:16.5px;line-height:24px;font-weight:bold;left:932.2px;letter-spacing:0.423px;">Здоровье [Украина]</div>
<div class="a t" style="top:879px;font-size:16.5px;line-height:24px;font-weight:bold;right:824.5px;letter-spacing:.1px;">1,000</div>
<div class="a" style="left:0;top:904.5px;width:2134px;height:10.5px;overflow:hidden">
<div class="a" style="left:0;top:-904.5px;width:2159px;height:1369px">
<div class="a t" style="top:907px;font-size:16.5px;line-height:24px;font-weight:bold;right:2088.5px;letter-spacing:.1px;">20</div>
<div class="a t" style="top:907px;font-size:16.5px;line-height:24px;font-weight:bold;right:1989.5px;letter-spacing:.1px;">225709</div>
<div class="a t" style="top:907px;font-size:16.5px;line-height:24px;font-weight:bold;right:1821.5px;letter-spacing:.1px;">125119</div>
<div class="a t" style="top:907px;font-size:16.5px;line-height:24px;font-weight:bold;left:344.2px;">Вітчизняний</div>
<div class="a t" style="top:907px;font-size:16.5px;line-height:24px;font-weight:bold;left:496.75px;letter-spacing:.1px;">Парацетамол табл. 500мг №10</div>
<div class="a t" style="top:907px;font-size:16.5px;line-height:24px;font-weight:bold;left:933px;letter-spacing:.1px;">Здоровье ООО ФК [Украина]</div>
<div class="a t" style="top:907px;font-size:16.5px;line-height:24px;font-weight:bold;right:824.5px;letter-spacing:.1px;">1,000</div>
</div></div>
<div class="a" style="left:0px;top:915px;width:2134px;height:1px;background:#c6c6c6;"></div>
<div class="a" style="left:0px;top:916px;width:2134px;height:1px;background:#9a9a9a;"></div>
<div class="a" style="left:0px;top:917px;width:2134px;height:1px;background:#a6a6a6;"></div>
<div class="a" style="left:0px;top:918px;width:2134px;height:32px;background:#f0f0f0;"></div>
<div class="a" style="left:17px;top:918px;width:1px;height:32px;background:#c8c8c8;"></div>
<div class="a" style="left:0px;top:950px;width:2134px;height:1px;background:#b4b4b4;"></div>
<div class="a" style="left:495px;top:920px;width:433px;height:28px;background:#e6e8e9;border:1px solid #d5d8da;"></div>
<div class="a t" style="top:922.5px;font-size:16.5px;line-height:24px;font-weight:bold;left:499.2px;letter-spacing:-0.125px;">Запис 1 із 33</div>
<div class="a" style="left:1262px;top:920px;width:75px;height:28px;background:#e6e8e9;border:1px solid #d5d8da;"></div>
<div class="a t" style="top:922.5px;font-size:16.5px;line-height:24px;font-weight:bold;right:824.5px;">43,82</div>
<div class="a" style="left:2134px;top:281px;width:2px;height:670px;background:#fff;"></div>
<div class="a" style="left:2136px;top:281px;width:23px;height:670px;background:#f0f0f0;"></div>
<div class="a" style="left:2136px;top:306px;width:23px;height:356px;background:#cdcdcd;"></div>
<div class="a" style="left:0px;top:952px;width:2159px;height:24px;background:#f0f0f0;"></div>
<div class="a" style="left:25px;top:953px;width:733px;height:22px;background:#cdcdcd;"></div>
<div class="a" style="left:0px;top:976px;width:2159px;height:300px;background:#fff;"></div>
<div class="a" style="left:2px;top:989px;width:2156px;height:288px;background:#fff;border:1px solid #a0a0a0;"></div>
<div class="a" style="left:3px;top:990px;width:2154px;height:31px;background:#f0f0f0;"></div>
<div class="a" style="left:3px;top:990px;width:66px;height:36px;background:#fff;"></div>
<div class="a" style="left:69px;top:994px;width:62px;height:28px;background:#f0f0f0;border:1px solid #e2e2e2;"></div>
<div class="a" style="left:130px;top:994px;width:259px;height:28px;background:#f0f0f0;border:1px solid #e2e2e2;"></div>
<div class="a" style="left:388px;top:994px;width:263px;height:28px;background:#f0f0f0;border:1px solid #e2e2e2;"></div>
<div class="a t" style="top:993.8px;font-size:16px;line-height:24px;color:#222;left:17.2px;letter-spacing:-0.130px;">Філія</div>
<div class="a t" style="top:996.5px;font-size:16px;line-height:24px;left:75.2px;letter-spacing:0.370px;">Зайве</div>
<div class="a t" style="top:996.5px;font-size:16px;line-height:24px;left:138.2px;letter-spacing:-0.115px;">Заявка. Залишки по замінникам</div>
<div class="a t" style="top:996.5px;font-size:16px;line-height:24px;left:396.2px;letter-spacing:0.105px;">Заявка до постачальника Зайве</div>
<div class="a" style="left:2153px;top:1026px;width:4px;height:250px;background:#ececec;"></div>
<div class="a" style="left:7px;top:1269px;width:2150px;height:7px;background:#ececec;"></div>
<div class="a" style="left:7px;top:1026px;width:2146px;height:243px;background:#fff;border:2px solid #9aa0aa;"></div>
<div class="a t" style="top:1031px;font-size:16px;line-height:24px;left:30.2px;letter-spacing:-0.130px;">Філія</div>
<div class="a t" style="top:1031px;font-size:16px;line-height:24px;left:75.2px;letter-spacing:-0.098px;">Замовлено</div>
<div class="a" style="left:26px;top:1029px;width:1px;height:27px;background:#e8e8e8;"></div>
<div class="a" style="left:70px;top:1029px;width:1px;height:27px;background:#e8e8e8;"></div>
<div class="a t" style="top:1121px;font-size:16.5px;line-height:24px;font-weight:bold;color:#7d7d7d;left:31.7px;letter-spacing:0.277px;">&lt;Немає даних</div>
<div class="a t" style="top:1140.5px;font-size:16.5px;line-height:24px;font-weight:bold;color:#7d7d7d;left:75.7px;letter-spacing:0.898px;">для</div>
<div class="a t" style="top:1160px;font-size:16.5px;line-height:24px;font-weight:bold;color:#7d7d7d;left:29.7px;letter-spacing:0.585px;">відображення</div>
<div class="a t" style="top:1179.5px;font-size:16.5px;line-height:24px;font-weight:bold;color:#7d7d7d;left:87.2px;letter-spacing:0.147px;">&gt;</div>
<div class="a" style="left:6px;top:1280px;width:19px;height:19px;background:#fff;border:1px solid #333;"></div>
<div class="a t" style="top:1278.5px;font-size:16px;line-height:24px;left:28.2px;letter-spacing:0.203px;">Показувати деталі</div>
<svg width="191" height="40" style="left:3px;top:1303px"><rect x="2.6" y="2.9" width="185.8" height="33.4" fill="none" stroke="#111" stroke-width="1.5"/></svg>
<div class="a t" style="top:1310.5px;font-size:16px;line-height:24px;left:8.2px;letter-spacing:0.041px;">Головна</div>
<svg width="191" height="40" style="left:193px;top:1303px"><rect x="2.6" y="2.9" width="185.8" height="33.4" fill="none" stroke="#111" stroke-width="1.5"/></svg>
<div class="a t" style="top:1310.5px;font-size:16px;line-height:24px;left:198.2px;letter-spacing:0.275px;">Список: Заявки пост ...</div>
<svg width="191" height="40" style="left:384px;top:1303px"><rect x="2.6" y="2.9" width="185.8" height="33.4" fill="none" stroke="#111" stroke-width="1.5"/></svg>
<div class="a t" style="top:1310.5px;font-size:16px;line-height:24px;left:388.2px;letter-spacing:0.275px;">Список: Заявки пост ...</div>
<svg width="191" height="40" style="left:574px;top:1303px"><rect x="2.6" y="2.9" width="185.8" height="33.4" fill="none" stroke="#111" stroke-width="1.5"/></svg>
<div class="a t" style="top:1310.5px;font-size:16px;line-height:24px;left:579.2px;letter-spacing:0.133px;">Заявка поставщикам  ..</div>
<div class="a" style="left:0px;top:1343px;width:2159px;height:1px;background:#dcdcdc;"></div>
<div class="a t s" style="top:1348px;font-size:16px;line-height:24px;left:29.2px;letter-spacing:0.305px;">База даних: TASA3@TITAN</div>
<div class="a t s" style="top:1348px;font-size:16px;line-height:24px;left:327.2px;letter-spacing:0.157px;">Користувач: GIFT</div>
<div class="a t s" style="top:1348px;font-size:16px;line-height:24px;left:635.2px;letter-spacing:0.694px;">3</div>
<div class="a t s" style="top:1348px;font-size:16px;line-height:24px;left:665.2px;letter-spacing:0.332px;">Кассовый аппарат не подключен</div>
<div class="a t s" style="top:1348px;font-size:16px;line-height:24px;left:1122.2px;letter-spacing:0.258px;">Зона: Склад [1]</div>
<div class="a" style="left:297px;top:1346px;width:1px;height:23px;background:#d4d4d4;"></div>
<div class="a" style="left:603px;top:1346px;width:1px;height:23px;background:#d4d4d4;"></div>
<div class="a" style="left:661px;top:1346px;width:1px;height:23px;background:#d4d4d4;"></div>
<div class="a" style="left:1117px;top:1346px;width:1px;height:23px;background:#d4d4d4;"></div>
<svg width="2159" height="1369" viewBox="0 0 2159 1369" style="left:0;top:0"><g transform="translate(2.8 -3.7)" fill="#ff7800"><path d="M6.3 6.4V2.6Q6.3 0 8.9 0H15.7Q18.3 0 18.3 2.6V6.4z"/><path d="M6.3 18.1V21.9Q6.3 24.5 8.9 24.5H15.7Q18.3 24.5 18.3 21.9V18.1z"/><path d="M6.5 6.2H2.6Q0 6.2 0 8.8V15.5Q0 18.1 2.6 18.1H6.5z"/><path d="M18.1 6.2H19.6Q21.7 6.2 21.7 8.3Q21.7 10.5 19.6 10.5Q18.1 10.5 18.1 8.5z"/><path d="M18.1 18.1H19.6Q21.7 18.1 21.7 16Q21.7 13.8 19.6 13.8Q18.1 13.8 18.1 15.8z"/></g><g transform="translate(11.5 28.2)" fill="#ff7800"><path d="M6.3 6.4V2.6Q6.3 0 8.9 0H15.7Q18.3 0 18.3 2.6V6.4z"/><path d="M6.3 18.1V21.9Q6.3 24.5 8.9 24.5H15.7Q18.3 24.5 18.3 21.9V18.1z"/><path d="M6.5 6.2H2.6Q0 6.2 0 8.8V15.5Q0 18.1 2.6 18.1H6.5z"/><path d="M18.1 6.2H19.6Q21.7 6.2 21.7 8.3Q21.7 10.5 19.6 10.5Q18.1 10.5 18.1 8.5z"/><path d="M18.1 18.1H19.6Q21.7 18.1 21.7 16Q21.7 13.8 19.6 13.8Q18.1 13.8 18.1 15.8z"/></g><path d="M1976 8.5H1991" stroke="#000" stroke-width="1.1"/><path d="M2045.5 4.6H2056.5V15.6H2045.5zM2048.8 4.6V1.4H2059.8V12.6H2056.5" fill="none" stroke="#000" stroke-width="1.1"/><path d="M2116 1L2131 16M2131 1L2116 16" stroke="#000" stroke-width="1.2"/><rect x="2075.5" y="29.5" width="25.5" height="25" fill="#fff" stroke="#e9e9e9" stroke-width="1.2"/><rect x="2103.5" y="29.5" width="25.5" height="25" fill="#fff" stroke="#e9e9e9" stroke-width="1.2"/><rect x="2131.5" y="29.5" width="25.5" height="25" fill="#fff" stroke="#e9e9e9" stroke-width="1.2"/><rect x="2082" y="44.2" width="9" height="3.4" fill="#7d8b9c"/><path d="M2114.5 37.2H2121.6V43" fill="none" stroke="#7d8b9c" stroke-width="2"/><rect x="2111" y="41.5" width="7.4" height="5.6" fill="#fff" stroke="#7d8b9c" stroke-width="1.8"/><path d="M2110.2 41.2H2119.2" stroke="#7d8b9c" stroke-width="2.4"/><path d="M2141 38L2150.5 47M2150.5 38L2141 47" stroke="#7d8b9c" stroke-width="3"/><path d="M265 146.5L271 152.5L277 146.5" fill="none" stroke="#8a8a8a" stroke-width="1.2"/><path d="M265 182.5L271 188.5L277 182.5" fill="none" stroke="#8a8a8a" stroke-width="1.2"/><path d="M732 146.5L738 152.5L744 146.5" fill="none" stroke="#8a8a8a" stroke-width="1.2"/><g transform="translate(13.5 216)"><path d="M11.5 11.5L17 17" stroke="#707070" stroke-width="2.6" stroke-linecap="round"/><circle cx="7.5" cy="7.5" r="5.8" fill="#e6effc" stroke="#a3b4cf" stroke-width="1.4"/><path d="M4.3 6.5A3.6 3.6 0 0 1 8 3.6" stroke="#fff" stroke-width="1.4" fill="none"/></g><rect x="4.5" y="249.0" width="4.5" height="1.4" fill="#b9b9b9"/><rect x="4.5" y="252.0" width="4.5" height="1.4" fill="#b9b9b9"/><rect x="4.5" y="255.0" width="4.5" height="1.4" fill="#b9b9b9"/><rect x="4.5" y="258.0" width="4.5" height="1.4" fill="#b9b9b9"/><rect x="4.5" y="261.0" width="4.5" height="1.4" fill="#b9b9b9"/><rect x="4.5" y="264.0" width="4.5" height="1.4" fill="#b9b9b9"/><rect x="4.5" y="267.0" width="4.5" height="1.4" fill="#b9b9b9"/><rect x="4.5" y="270.0" width="4.5" height="1.4" fill="#b9b9b9"/><g transform="translate(18 250.7)"><path d="M7.5 0h6v7.5h7.5v6h-7.5v7.5h-6v-7.5h-7.5v-6h7.5z" fill="#7ccb76"/><path d="M8.5 1h4v7.5h7.5v4h-7.5v7.5h-4v-7.5h-7.5v-4h7.5z" fill="#a2de9c"/><path d="M9.5 2h2v7.5h7.5v1.6h-17v-1.6h7.5z" fill="#b6e8b1" opacity=".7"/></g><g transform="translate(118 249)"><path d="M1 23.5L3 17.5L18.5 2L24 7.5L8.5 23z" fill="#f3c73d"/><path d="M3 17.5L18.5 2L20.8 4.3L5.2 19.8z" fill="#f9e08a"/><path d="M6 21.5L21.7 5.2L24 7.5L8.5 23z" fill="#d9a520"/><path d="M18.5 2L20.3 .6Q22.5 -.5 24.3 1.5Q26 3.5 25 5.8L24 7.5z" fill="#f08a7e"/><path d="M17 3.5L18.5 2L24 7.5L22.5 9z" fill="#cfcfcf"/><path d="M1 23.5L3 17.5L8.5 23z" fill="#f3c9a0"/><path d="M1 23.5L1.9 20.8L3.8 22.8z" fill="#444"/></g><g transform="translate(311.5 250.5)" stroke-linecap="butt"><path d="M2 2L19.2 19.2M19.2 2L2 19.2" stroke="#ee7f68" stroke-width="6.4"/><path d="M2.8 2.8L18.4 18.4M18.4 2.8L2.8 18.4" stroke="#f7a18c" stroke-width="4"/></g><path d="M425.6 258.2h8.4l-4.2 4.6z" fill="#000"/><g transform="translate(458.8 260.7)"><rect x="-2.6" y="-11.5" width="5.2" height="5" rx="1.2" transform="rotate(0)" fill="#c9c9c9" stroke="#b5b5b5" stroke-width=".6"/><rect x="-2.6" y="-11.5" width="5.2" height="5" rx="1.2" transform="rotate(45)" fill="#c9c9c9" stroke="#b5b5b5" stroke-width=".6"/><rect x="-2.6" y="-11.5" width="5.2" height="5" rx="1.2" transform="rotate(90)" fill="#c9c9c9" stroke="#b5b5b5" stroke-width=".6"/><rect x="-2.6" y="-11.5" width="5.2" height="5" rx="1.2" transform="rotate(135)" fill="#c9c9c9" stroke="#b5b5b5" stroke-width=".6"/><rect x="-2.6" y="-11.5" width="5.2" height="5" rx="1.2" transform="rotate(180)" fill="#c9c9c9" stroke="#b5b5b5" stroke-width=".6"/><rect x="-2.6" y="-11.5" width="5.2" height="5" rx="1.2" transform="rotate(225)" fill="#c9c9c9" stroke="#b5b5b5" stroke-width=".6"/><rect x="-2.6" y="-11.5" width="5.2" height="5" rx="1.2" transform="rotate(270)" fill="#c9c9c9" stroke="#b5b5b5" stroke-width=".6"/><rect x="-2.6" y="-11.5" width="5.2" height="5" rx="1.2" transform="rotate(315)" fill="#c9c9c9" stroke="#b5b5b5" stroke-width=".6"/><circle r="8.3" fill="#d4d4d4" stroke="#b8b8b8" stroke-width=".8"/><circle r="3.4" fill="#f0f0f0" stroke="#b8b8b8" stroke-width=".8"/></g><path d="M700 258.2h8.4l-4.2 4.6z" fill="#000"/><g transform="translate(721.5 250.5)"><rect x="2.5" y=".5" width="20.5" height="20" fill="#fdfdfd" stroke="#9db9e2" stroke-width="1.2"/><path d="M10 3.5h11" stroke="#8fd07a" stroke-width="1.6"/><path d="M10 7.5h11M10 11h11M10 14.5h11M10 18h11" stroke="#c3d3ea" stroke-width="1.2"/><path d="M15.5 5v14" stroke="#c3d3ea" stroke-width="1"/><path d="M5 1.5L12.5 1.5L9.5 6.5L14 6.5L3.5 17.5L6.5 10.5L1 10.5z" fill="#f6cf5c" stroke="#e3b23a" stroke-width=".7" stroke-linejoin="round"/></g><g transform="translate(973.5 249.5)"><path d="M5 0H21.5Q22.5 0 22.5 1V16.5Q22.5 17.5 21.5 17.5H5Q4 17.5 4 16.5V1Q4 0 5 0z" fill="#7fb2e4"/><rect x="7.5" y="0" width="11" height="7" fill="#e9f1fb"/><rect x="9" y="1" width="2.4" height="4.8" fill="#5e8fc9"/><rect x="14" y="1" width="2.4" height="4.8" fill="#5e8fc9"/><rect x="7.5" y="10" width="12" height="7.5" fill="#cfe0f4"/><circle cx="5" cy="16.5" r="4.3" fill="#c4c9cf"/><circle cx="5" cy="16.5" r="1.6" fill="#eef0f2"/><path d="M5 11v11M-.5 16.5h11M1.1 12.6l7.8 7.8M8.9 12.6l-7.8 7.8" stroke="#c4c9cf" stroke-width="1.8"/><circle cx="5" cy="16.5" r="1.6" fill="#eef0f2"/></g><g transform="translate(1174.5 249)"><defs><linearGradient id="pg" x1="0" y1="0" x2="0" y2="1"><stop offset="0" stop-color="#e2e2e2"/><stop offset=".55" stop-color="#b9b9b9"/><stop offset=".8" stop-color="#8e8e8e"/><stop offset="1" stop-color="#d0d0d0"/></linearGradient></defs><path d="M5 0H15L19.5 4.5V10H5z" fill="#d6e8fc" stroke="#b5d3f5" stroke-width=".8"/><rect x="0" y="7.5" width="24" height="13" rx="3" fill="url(#pg)"/><rect x="4.5" y="19" width="15" height="4.5" fill="#e6f1fd" stroke="#b5d3f5" stroke-width=".8"/><circle cx="20.5" cy="10.8" r=".9" fill="#555"/></g><g transform="translate(1257 250.5)"><path d="M3.4 2V19" stroke="#a9c5ee" stroke-width="1.3"/><path d="M.8 4.2L3.4 .8L6 4.2zM.8 16.8L3.4 20.2L6 16.8z" fill="#a9c5ee"/><path d="M7.5 3.6H19.5M7.5 8.2H16.5M7.5 12.8H19.5M7.5 17.4H16.5" stroke="#9c9c9c" stroke-width="1.7"/></g><path d="M1289.6 258.2h8.4l-4.2 4.6z" fill="#000"/><g transform="translate(2032 250)"><defs><linearGradient id="rg" x1="0" y1="0" x2="1" y2="1"><stop offset="0" stop-color="#b4dcf8"/><stop offset="1" stop-color="#55b3f3"/></linearGradient></defs><path d="M2.6 15.5A9 9 0 0 1 13.5 2.4" fill="none" stroke="#9ccff5" stroke-width="4.6"/><path d="M19.6 6.5A9 9 0 0 1 8.5 19.6" fill="none" stroke="#5ab6f4" stroke-width="4.6"/><path d="M.5 .8H10.8L.5 11z" fill="#8fc9f5"/><path d="M21.8 21.6H11.4L21.8 11.3z" fill="#45aef5"/><path d="M13.5 .3L19 5.5L12.5 7z" fill="#b9def8"/><path d="M8.5 21.8L3 16.6L9.5 15z" fill="#7cc4f6"/></g><path d="M2144.5 267h8l-4.0 4.6z" fill="#000"/><g transform="translate(3.8 342)" fill="#1a1a1a"><rect x="0" y="0.2" width="1.5" height="1.3"/><rect x="3" y="0.0" width="6.8" height="1.7"/><rect x="0" y="3.3" width="1.5" height="1.3"/><rect x="3" y="3.1" width="6.8" height="1.7"/><rect x="0" y="6.4" width="1.5" height="1.3"/><rect x="3" y="6.2" width="6.8" height="1.7"/><rect x="0" y="9.5" width="1.5" height="1.3"/><rect x="3" y="9.3" width="6.8" height="1.7"/><rect x="0" y="12.6" width="1.5" height="1.3"/><rect x="3" y="12.4" width="6.8" height="1.7"/></g><g transform="translate(13 1035)" fill="#1a1a1a"><rect x="0" y="0.2" width="1.5" height="1.3"/><rect x="3" y="0.0" width="6.8" height="1.7"/><rect x="0" y="3.3" width="1.5" height="1.3"/><rect x="3" y="3.1" width="6.8" height="1.7"/><rect x="0" y="6.4" width="1.5" height="1.3"/><rect x="3" y="6.2" width="6.8" height="1.7"/><rect x="0" y="9.5" width="1.5" height="1.3"/><rect x="3" y="9.3" width="6.8" height="1.7"/><rect x="0" y="12.6" width="1.5" height="1.3"/><rect x="3" y="12.4" width="6.8" height="1.7"/></g><path d="M2028.5 354L2033.2 344.5L2038 354z" fill="#fff" stroke="#9a9a9a" stroke-width="1"/><path d="M2142.3 296.8L2147.3 291.8L2152.3 296.8" fill="none" stroke="#606060" stroke-width="2.6"/><path d="M2142.3 936.0L2147.3 941.0L2152.3 936.0" fill="none" stroke="#606060" stroke-width="2.6"/><path d="M14.3 959L9.3 964L14.3 969" fill="none" stroke="#606060" stroke-width="2.6"/><path d="M2119.8 959L2124.8 964L2119.8 969" fill="none" stroke="#606060" stroke-width="2.6"/><path d="M9.5 1289.5L14 1294.5L22.5 1283.5" fill="none" stroke="#3c3c3c" stroke-width="1.7"/><g transform="translate(4.5 1349)"><defs><linearGradient id="dbg" x1="0" y1="0" x2="1" y2="0"><stop offset="0" stop-color="#7f7bb0"/><stop offset=".45" stop-color="#a9a6cf"/><stop offset="1" stop-color="#6f6aa3"/></linearGradient></defs><path d="M0 2.5Q0 0 3 0H15Q17.7 0 17.7 2.5V20H0z" fill="url(#dbg)"/><path d="M1 2.2Q1 .6 3 .6H14.8Q16.7 .6 16.7 2.2V5.3H1z" fill="#c9c8e0"/><rect x=".8" y="6.2" width="16" height="1.9" fill="#2c86e6"/><rect x=".8" y="8.9" width="16" height="1.9" fill="#2c86e6"/><rect x=".8" y="11.6" width="16" height="1.9" fill="#2c86e6"/><rect x=".8" y="14.3" width="16" height="1.9" fill="#2c86e6"/></g><g transform="translate(303.8 1348.5)"><circle cx="5.8" cy="5.8" r="5.6" fill="#ec2a10"/><path d="M1 20.5Q1 14 5 13L8.5 15.5L12 13Q15.8 14 15.8 20.5z" fill="#8f91e3"/><circle cx="8.6" cy="8.2" r="5" fill="#9ea4ea"/><path d="M5 8.5Q8.6 5.5 12.2 8.5V6Q8.6 3.5 5 6z" fill="#c8cdf6"/><path d="M5.6 11.3H11.6L8.6 14.6z" fill="#f2a048"/></g><g transform="translate(607.5 1347)"><path d="M.5 22V9.5L3.5 4.5L11 2.5L19.5 8.5V22z" fill="#8c8fd2"/><path d="M2 9L4.5 5.2L11 3.5L15 6.5L8 12z" fill="#b8baea"/><path d="M12 .6L14.5 4.5" stroke="#555" stroke-width="1"/><path d="M3.5 10.5L6 10.5L3.5 22H1z" fill="#f3d23a"/><path d="M4.6 10.5L6 10.5L3.5 22H2.6z" fill="#7a5a10"/><path d="M12 14L14.5 14L13 22H10.5z" fill="#f3d23a"/><path d="M13.3 14L14.5 14L13 22H12z" fill="#7a5a10"/></g><path d="M412.1 667.2L439.4 642.7L485.5 601.0L535.9 555.2L595.0 501.4L656.9 447.1L717.7 393.6L752.4 362.8L818.7 302.8L843.0 280.8L837.9 275.2L813.6 297.2L747.4 357.2L713.0 388.4L653.2 442.9L592.4 498.6L533.7 552.8L483.7 599.0L438.1 641.3L411.3 666.4z" fill="#f00000"/><path d="M830.4 277.5L843.2 275.1L839.7 287.6" fill="none" stroke="#f00000" stroke-width="4.9" stroke-linecap="round" stroke-linejoin="miter" stroke-miterlimit="10"/></svg>
</body></html>
